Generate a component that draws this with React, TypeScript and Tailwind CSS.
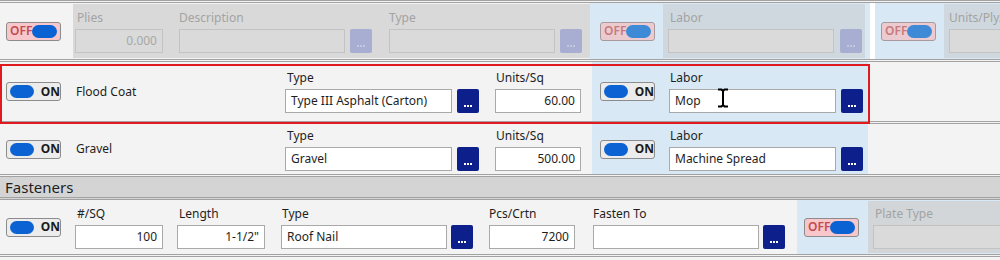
import React from "react";

const FONT = { fontFamily: '"Noto Sans", "Open Sans", Arial, sans-serif' };

function Toggle({ on, faded = false }: { on: boolean; faded?: boolean }) {
  if (on) {
    return (
      <div className="w-[55px] h-[19px] shrink-0 border border-[#8c8c8c] rounded-[3px] bg-[#ececec] flex items-center pl-[3px] gap-[7px]">
        <div className="w-[26px] h-[13px] rounded-full bg-[#0b63d3]" />
        <span className="text-[12px] font-bold text-[#1b1b1b] leading-none">ON</span>
      </div>
    );
  }
  return (
    <div
      className={
        "w-[55px] h-[19px] shrink-0 border rounded-[3px] flex items-center justify-between pl-[3px] pr-[3px] " +
        (faded ? "border-[#a89a9c] bg-[#eccbd0]" : "border-[#8c8c8c] bg-[#f7c7cc]")
      }
    >
      <span
        className={
          "text-[12px] font-semibold leading-none " + (faded ? "text-[#c77a7c]" : "text-[#c44a4f]")
        }
      >
        OFF
      </span>
      <div className={"w-[25px] h-[13px] rounded-full " + (faded ? "bg-[#3f8ad6]" : "bg-[#0b63d3]")} />
    </div>
  );
}

function DotsButton({ disabled = false, className = "" }: { disabled?: boolean; className?: string }) {
  return (
    <div
      className={
        "w-[22px] h-[24px] shrink-0 rounded-[2px] flex items-end justify-center pb-[6px] gap-[1px] " +
        (disabled ? "bg-[#a8add2]" : "bg-[#0c1f8a]") +
        " " +
        className
      }
    >
      <div className={"w-[2px] h-[2px] " + (disabled ? "bg-[#c3c6df]" : "bg-white")} />
      <div className={"w-[2px] h-[2px] " + (disabled ? "bg-[#c3c6df]" : "bg-white")} />
      <div className={"w-[2px] h-[2px] " + (disabled ? "bg-[#c3c6df]" : "bg-white")} />
    </div>
  );
}

function Field({
  label,
  value = "",
  width,
  right = false,
  disabled = false,
  button = false,
  btnGap = "ml-[5px]",
  labelPad = "pl-[2px]",
}: {
  label: string;
  value?: string;
  width: string;
  right?: boolean;
  disabled?: boolean;
  button?: boolean;
  btnGap?: string;
  labelPad?: string;
}) {
  return (
    <div className="flex flex-col shrink-0">
      <div
        className={
          "h-[16px] text-[12px] leading-[16px] whitespace-nowrap " +
          labelPad +
          " " +
          (disabled ? "text-[#a3a3a3]" : "text-[#1e1e1e]")
        }
      >
        {label}
      </div>
      <div className="flex items-center mt-[3px]">
        <div
          className={
            "h-[24px] border px-[5px] flex items-center text-[12px] whitespace-nowrap overflow-hidden " +
            width +
            " " +
            (right ? "justify-end " : "justify-start ") +
            (disabled
              ? "bg-[#dadada] border-[#c3c3c3] text-[#a8a8a8]"
              : "bg-white border-[#a9a9a9] text-[#1e1e1e]")
          }
        >
          {value}
        </div>
        {button && <DotsButton disabled={disabled} className={btnGap} />}
      </div>
    </div>
  );
}

function IBeam() {
  return (
    <svg
      className="absolute left-[717px] top-[26px]"
      width="12"
      height="20"
      viewBox="0 0 12 20"
    >
      <path d="M1 1.5 H4.5 L6 3 L7.5 1.5 H11 M6 3 V17 M1 18.5 H4.5 L6 17 L7.5 18.5 H11" stroke="#000" strokeWidth="2" fill="none" />
    </svg>
  );
}

const SEP = "border-b-[3px] border-double border-[#a2a2a2]";

export default function App() {
  return (
    <div style={FONT} className="w-[1000px] h-[260px] bg-[#f3f3f3] overflow-hidden text-[#1e1e1e]">
      {/* Row 1: disabled plies row */}
      <div className={"flex h-[62px] border-t-[3px] border-double border-[#a2a2a2] " + SEP}>
        <div className="w-[73px] shrink-0 flex items-center pl-[6px]">
          <Toggle on={false} />
        </div>
        <div className="w-[517px] shrink-0 bg-[#d9d9d9] my-[1px] flex items-center pl-[2px]">
          <Field label="Plies" value="0.000" width="w-[88px]" right disabled labelPad="pl-[2px]" />
          <div className="ml-[16px]">
            <Field label="Description" width="w-[166px]" disabled button labelPad="pl-0" />
          </div>
          <div className="ml-[17px]">
            <Field label="Type" width="w-[166px]" disabled button labelPad="pl-0" />
          </div>
        </div>
        <div className="w-[280px] shrink-0 bg-[#d8e8f5] flex items-center pl-[10px]">
          <Toggle on={false} faded />
          <div className="ml-[8px] w-[202px] self-stretch my-[1px] bg-[#cfd8de] flex items-center pl-[5px]">
            <Field label="Labor" width="w-[166px]" disabled button btnGap="ml-[6px]" />
          </div>
        </div>
        <div className="w-[5px] shrink-0 bg-white" />
        <div className="flex-1 bg-[#d8e8f5] flex items-center pl-[6px] overflow-hidden">
          <Toggle on={false} faded />
          <div className="ml-[8px] self-stretch my-[1px] flex-1 bg-[#cfd8de] flex items-center pl-[5px]">
            <Field label="Units/Ply/Sq" width="w-[90px]" disabled labelPad="pl-0" />
          </div>
        </div>
      </div>

      {/* Row 2: Flood Coat (highlighted) */}
      <div className={"relative flex h-[62px] " + SEP}>
        <div className="w-[73px] shrink-0 flex items-center pl-[6px]">
          <Toggle on />
        </div>
        <div className="w-[212px] shrink-0 flex items-center pl-[3px] text-[12px]">Flood Coat</div>
        <div className="flex items-center">
          <Field label="Type" value="Type III Asphalt (Carton)" width="w-[167px]" button />
          <div className="ml-[16px]">
            <Field label="Units/Sq" value="60.00" width="w-[86px]" right labelPad="pl-[1px]" />
          </div>
        </div>
        <div className="ml-[11px] w-[276px] shrink-0 bg-[#d8e8f5] flex items-center pl-[8px]">
          <Toggle on />
          <div className="ml-[14px]">
            <Field label="Labor" value="Mop" width="w-[167px]" button labelPad="pl-[1px]" />
          </div>
        </div>
        <div className="absolute left-0 top-[2px] w-[870px] h-[60px] border-2 border-[#e01a1f] pointer-events-none" />
        <IBeam />
      </div>

      {/* Row 3: Gravel */}
      <div className={"flex h-[53px] " + SEP}>
        <div className="w-[73px] shrink-0 flex items-center pl-[6px]">
          <Toggle on />
        </div>
        <div className="w-[212px] shrink-0 flex items-center pl-[3px] text-[12px]">Gravel</div>
        <div className="flex items-center">
          <Field label="Type" value="Gravel" width="w-[167px]" button />
          <div className="ml-[16px]">
            <Field label="Units/Sq" value="500.00" width="w-[86px]" right labelPad="pl-[1px]" />
          </div>
        </div>
        <div className="ml-[11px] w-[276px] shrink-0 bg-[#d8e8f5] flex items-center pl-[8px]">
          <Toggle on />
          <div className="ml-[14px]">
            <Field label="Labor" value="Machine Spread" width="w-[167px]" button labelPad="pl-[1px]" />
          </div>
        </div>
      </div>

      {/* Fasteners header */}
      <div className={"h-[23px] bg-[#d4d4d4] flex items-center pl-[5px] text-[15px] text-[#1e1e1e] " + SEP}>
        Fasteners
      </div>

      {/* Row 4: fasteners */}
      <div className={"flex h-[57px] " + SEP}>
        <div className="w-[73px] shrink-0 flex items-center pl-[6px]">
          <Toggle on />
        </div>
        <div className="flex items-center pl-[2px]">
          <Field label="#/SQ" value="100" width="w-[88px]" right />
          <div className="ml-[14px]">
            <Field label="Length" value={'1-1/2"'} width="w-[88px]" right />
          </div>
          <div className="ml-[16px]">
            <Field label="Type" value="Roof Nail" width="w-[166px]" button btnGap="ml-[4px]" labelPad="pl-[1px]" />
          </div>
          <div className="ml-[16px]">
            <Field label="Pcs/Crtn" value="7200" width="w-[86px]" right labelPad="pl-0" />
          </div>
          <div className="ml-[18px]">
            <Field label="Fasten To" width="w-[166px]" button btnGap="ml-[4px]" labelPad="pl-0" />
          </div>
        </div>
        <div className="ml-[12px] flex-1 bg-[#d8e8f5] flex items-center pl-[7px] overflow-hidden">
          <Toggle on={false} />
          <div className="ml-[9px] self-stretch my-[1px] flex-1 bg-[#d2d6d9] flex items-center pl-[5px]">
            <Field label="Plate Type" width="w-[166px]" disabled labelPad="pl-[2px]" />
          </div>
        </div>
      </div>
    </div>
  );
}
